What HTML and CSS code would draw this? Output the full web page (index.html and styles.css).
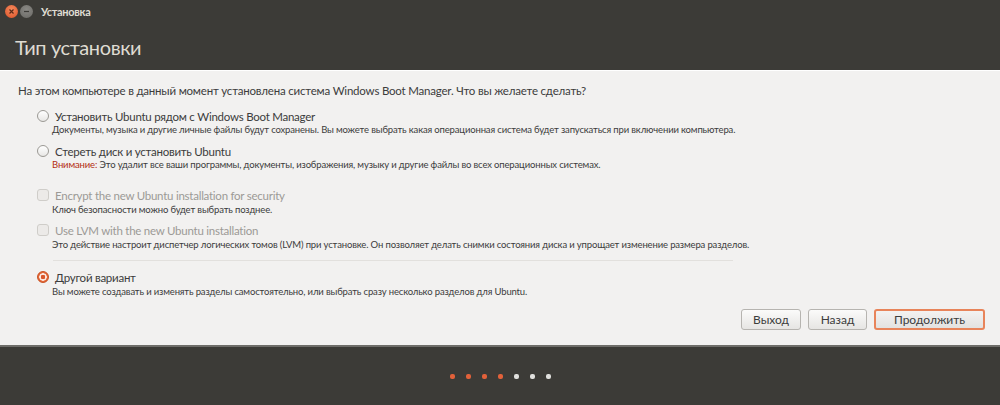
FILE: index.html
```html
<!DOCTYPE html>
<html lang="ru">
<head>
    <meta charset="UTF-8">
    <title>Установка</title>
    <link rel="stylesheet" href="styles.css">
</head>
<body>
    <div class="window">
        <div class="titlebar">
            <span class="wm-btn wm-close">
                <svg width="7" height="7" viewBox="0 0 7 7"><path d="M1.5 1.5L5.5 5.5M5.5 1.5L1.5 5.5" stroke="#5a2a18" stroke-width="1.2"/></svg>
            </span>
            <span class="wm-btn wm-min">
                <svg width="7" height="7" viewBox="0 0 7 7"><path d="M1 3.5H6" stroke="#3c3b37" stroke-width="1.2"/></svg>
            </span>
            <span class="wm-title">Установка</span>
        </div>

        <div class="header">
            <h1>Тип установки</h1>
        </div>

        <div class="content">
            <p class="question">На этом компьютере в данный момент установлена система Windows Boot Manager. Что вы желаете сделать?</p>

            <div class="options">
                <div class="option">
                    <div class="row"><span class="radio"></span><span class="label">Установить Ubuntu рядом с Windows Boot Manager</span></div>
                    <div class="desc">Документы, музыка и другие личные файлы будут сохранены. Вы можете выбрать какая операционная система будет запускаться при включении компьютера.</div>
                </div>
                <div class="option">
                    <div class="row"><span class="radio"></span><span class="label">Стереть диск и установить Ubuntu</span></div>
                    <div class="desc"><span class="warn">Внимание:</span> Это удалит все ваши программы, документы, изображения, музыку и другие файлы во всех операционных системах.</div>
                </div>

                <div class="option chk first">
                    <div class="row"><span class="check"></span><span class="label off">Encrypt the new Ubuntu installation for security</span></div>
                    <div class="desc">Ключ безопасности можно будет выбрать позднее.</div>
                </div>
                <div class="option chk">
                    <div class="row"><span class="check"></span><span class="label off">Use LVM with the new Ubuntu installation</span></div>
                    <div class="desc">Это действие настроит диспетчер логических томов (LVM) при установке. Он позволяет делать снимки состояния диска и упрощает изменение размера разделов.</div>
                </div>

                <hr class="sep">

                <div class="option last">
                    <div class="row"><span class="radio on"></span><span class="label">Другой вариант</span></div>
                    <div class="desc">Вы можете создавать и изменять разделы самостоятельно, или выбрать сразу несколько разделов для Ubuntu.</div>
                </div>
            </div>

            <div class="buttons">
                <button type="button" class="quit">Выход</button>
                <button type="button" class="back">Назад</button>
                <button type="button" class="primary">Продолжить</button>
            </div>
        </div>

        <div class="footer">
            <span class="dot done"></span>
            <span class="dot done"></span>
            <span class="dot done"></span>
            <span class="dot done"></span>
            <span class="dot"></span>
            <span class="dot"></span>
            <span class="dot"></span>
        </div>
    </div>
</body>
</html>
```

FILE: styles.css
```css
body {
    margin: 0;
    font-family: Lato, "Open Sans", sans-serif;
    background-color: #3c3b37;
}
.window {
    width: 1000px;
    height: 405px;
    display: flex;
    flex-direction: column;
}
.titlebar {
    height: 22px;
    display: flex;
    align-items: center;
    padding-left: 5px;
    background-color: #3c3b37;
}
.wm-btn {
    width: 13px;
    height: 13px;
    border-radius: 50%;
    display: flex;
    align-items: center;
    justify-content: center;
    margin-right: 2px;
}
.wm-close {
    background: radial-gradient(circle at 50% 35%, #f58a5d, #dc5127);
}
.wm-min {
    background: radial-gradient(circle at 50% 35%, #8a8985, #6a6965);
}
.wm-title {
    margin-left: 6px;
    color: #dfdbd2;
    font-size: 11px;
    font-weight: bold;
    letter-spacing: -0.3px;
}
.header {
    height: 48px;
    display: flex;
    align-items: center;
    padding-left: 15px;
    border-bottom: 1px solid #ffffff;
}
h1 {
    margin: 0;
    margin-top: 1px;
    font-size: 20px;
    font-weight: normal;
    letter-spacing: -0.4px;
    color: #dfdbd2;
}
.content {
    flex: 1;
    background-color: #f2f1f0;
    padding: 0 15px 0 18px;
    display: flex;
    flex-direction: column;
    border-bottom: 2px solid #6e6d69;
}
.question {
    margin: 12px 0 10px;
    font-size: 11.5px;
    letter-spacing: -0.2px;
    line-height: 16px;
    color: #3c3c3c;
}
.options {
    padding-left: 19px;
}
.option {
    margin-bottom: 7px;
}
.option.chk.first {
    margin-top: 15px;
}
.option.chk {
    margin-bottom: 5px;
}
.option.chk .row,
.option.last .row {
    height: 16px;
}
.option.last {
    margin-bottom: 0;
}
.row {
    display: flex;
    align-items: center;
    height: 14px;
}
.label {
    margin-left: 6px;
    font-size: 11.5px;
    letter-spacing: -0.25px;
    color: #3c3c3c;
}
.label.off {
    color: #9c9a96;
}
.desc {
    margin-left: 15px;
    font-size: 9.5px;
    letter-spacing: -0.15px;
    color: #3c3c3c;
    line-height: 14px;
}
.warn {
    color: #b22d12;
}
.radio {
    width: 10px;
    height: 10px;
    border: 1px solid #9b9994;
    border-radius: 50%;
    background: linear-gradient(#ffffff, #e8e7e5);
}
.radio.on {
    border-color: #c9501f;
    background: radial-gradient(circle, #d9562a 0 2px, #fbe7dd 2.5px 3.5px, #e4683a 4px);
}
.check {
    width: 10px;
    height: 10px;
    border: 1px solid #cfcdc9;
    border-radius: 3px;
    background-color: #eceae8;
}
.sep {
    margin: 8px 0 8px 16px;
    width: 680px;
    border: none;
    border-top: 1px solid #e2e0dd;
}
.buttons {
    display: flex;
    justify-content: flex-end;
    gap: 7px;
    margin-top: 10px;
}
button {
    height: 21px;
    padding: 0;
    font-family: inherit;
    font-size: 12px;
    color: #3c3c3c;
    border: 1px solid #b6b4b0;
    border-radius: 3px;
    background: linear-gradient(#fbfbfa, #e6e5e3);
}
button.quit {
    width: 60px;
}
button.back {
    width: 59px;
}
button.primary {
    width: 111px;
    border: 2px solid #e8845a;
    background: linear-gradient(#f3f2f1, #e3e2e0);
}
.footer {
    height: 58px;
    display: flex;
    justify-content: center;
    align-items: center;
    gap: 11px;
    background-color: #3c3b37;
}
.dot {
    width: 5px;
    height: 5px;
    border-radius: 2px;
    background-color: #e0e0dd;
}
.dot.done {
    background-color: #e2613a;
}
```
